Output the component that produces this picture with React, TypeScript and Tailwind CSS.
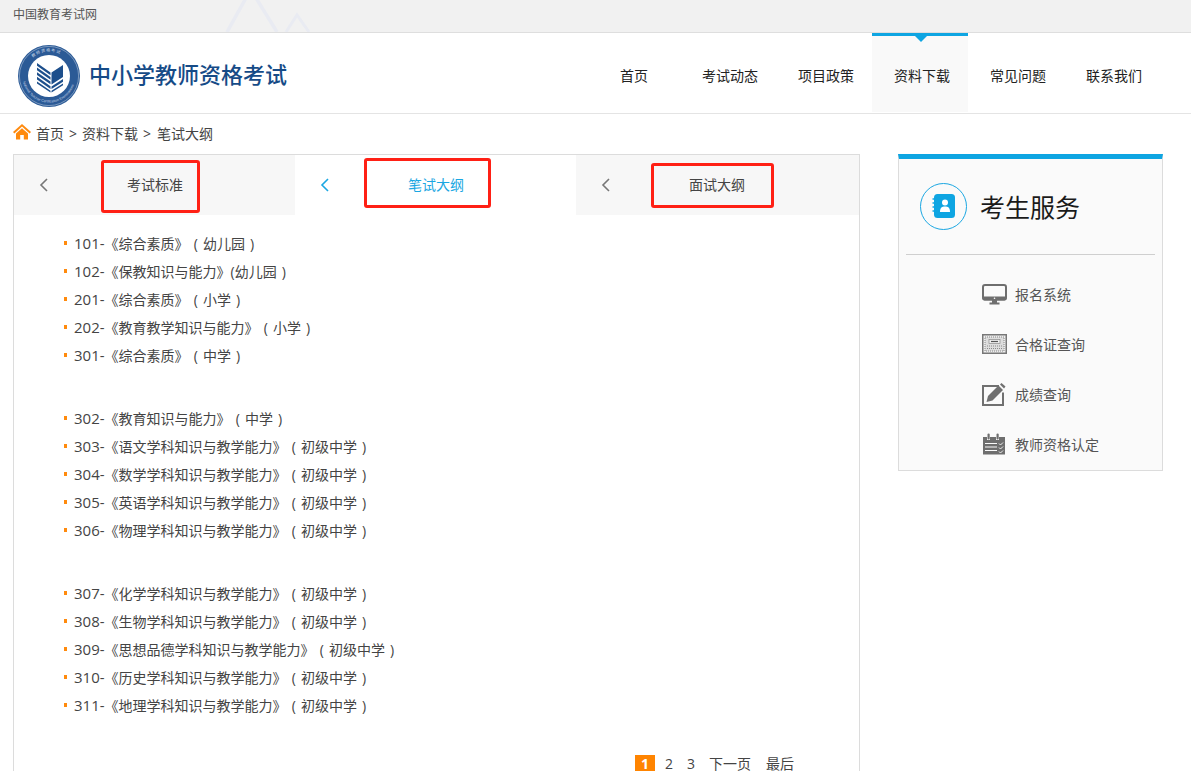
import React from "react";

const FONT = "font-['Open_Sans','Noto_Sans_CJK_SC',sans-serif]";

const navItems = ["首页", "考试动态", "项目政策", "资料下载", "常见问题", "联系我们"];

const groups = [
  [
    ["101-", "《综合素质》 ( 幼儿园 )"],
    ["102-", "《保教知识与能力》(幼儿园 )"],
    ["201-", "《综合素质》 ( 小学 )"],
    ["202-", "《教育教学知识与能力》 ( 小学 )"],
    ["301-", "《综合素质》 ( 中学 )"],
  ],
  [
    ["302-", "《教育知识与能力》 ( 中学 )"],
    ["303-", "《语文学科知识与教学能力》 ( 初级中学 )"],
    ["304-", "《数学学科知识与教学能力》 ( 初级中学 )"],
    ["305-", "《英语学科知识与教学能力》 ( 初级中学 )"],
    ["306-", "《物理学科知识与教学能力》 ( 初级中学 )"],
  ],
  [
    ["307-", "《化学学科知识与教学能力》 ( 初级中学 )"],
    ["308-", "《生物学科知识与教学能力》 ( 初级中学 )"],
    ["309-", "《思想品德学科知识与教学能力》 ( 初级中学 )"],
    ["310-", "《历史学科知识与教学能力》 ( 初级中学 )"],
    ["311-", "《地理学科知识与教学能力》 ( 初级中学 )"],
  ],
];

const Logo = () => (
  <svg width="62" height="62" viewBox="0 0 62 62" className="shrink-0">
    <defs>
      <path id="ringTop" d="M6.5 31 A24.5 24.5 0 0 1 55.5 31" />
      <path id="ringBottom" d="M4.5 31 A26.5 26.5 0 0 0 57.5 31" />
    </defs>
    <circle cx="31" cy="31" r="31" fill="#2b5a96" />
    <circle cx="31" cy="31" r="29.6" fill="none" stroke="#c9d6e6" strokeWidth="0.5" />
    <circle cx="31" cy="31" r="21" fill="#fff" />
    <text fontSize="4" fill="#c9d6e6" fontFamily="Noto Sans CJK SC">
      <textPath href="#ringTop" startOffset="27%">教 师 资 格 考 试</textPath>
    </text>
    <text fontSize="3.5" fill="#c9d6e6" fontFamily="Liberation Sans">
      <textPath href="#ringBottom" startOffset="7%">National Teacher Certification Examinations</textPath>
    </text>
    {/* left stripes of the book */}
    <path
      d="M19 18 L32.5 27.5 V30.2 L19 20.7 Z M19 22.6 L32.5 32 V34.7 L19 25.3 Z M19 27.2 L32.5 36.6 V39.3 L19 29.9 Z M19 31.8 L32.5 41.2 V43.9 L19 34.5 Z M19 36.4 L32.5 45.8 V47.4 L19 38.5 Z"
      fill="#1d4f8c"
    />
    {/* right side, solid block then stripes */}
    <path
      d="M33.5 27.5 L45 20 V32 L33.5 39.5 Z M33.5 41.4 L45 34 V36.7 L33.5 44.1 Z M33.5 45.8 L45 38.4 V40.2 L33.5 47.4 Z"
      fill="#1d4f8c"
    />
  </svg>
);

const Chevron = ({ active }: { active?: boolean }) => (
  <svg width="10" height="14" viewBox="0 0 10 14" fill="none" className="shrink-0">
    <path d="M8 1 L2 7 L8 13" stroke={active ? "#1ba7e2" : "#777"} strokeWidth="1.6" />
  </svg>
);

const MonitorIcon = () => (
  <svg width="25" height="21" viewBox="0 0 25 21">
    <rect x="1" y="1" width="23" height="14.5" rx="2" fill="none" stroke="#6e6e6e" strokeWidth="2" />
    <path d="M0.5 12.5 H24.5 V14 A2 2 0 0 1 22.5 16.5 H2.5 A2 2 0 0 1 0.5 14 Z" fill="#6e6e6e" />
    <path d="M10 16 H15 V18.5 H17.5 V20.5 H7.5 V18.5 H10 Z" fill="#6e6e6e" />
    <circle cx="12.5" cy="14.2" r="0.8" fill="#fff" />
  </svg>
);

const CertIcon = () => (
  <svg width="25" height="20" viewBox="0 0 25 20">
    <rect x="0.75" y="0.75" width="23.5" height="18.5" fill="#eee" stroke="#777" strokeWidth="1.5" />
    <rect x="3" y="3" width="19" height="14" fill="#ddd" stroke="#888" strokeDasharray="1 1" />
    <rect x="7" y="5.5" width="11" height="4" fill="#eee" stroke="#8a8a8a" strokeWidth="0.7" />
    <path d="M9 7.5 H16" stroke="#555" strokeWidth="1.2" />
    <path d="M5 12 H20 M5 14.5 H20" stroke="#8a8a8a" strokeDasharray="1 1" />
  </svg>
);

const EditIcon = () => (
  <svg width="24" height="23" viewBox="0 0 24 23">
    <path d="M17 3 H1 V22 H21 V9.5" fill="none" stroke="#707070" strokeWidth="2" />
    <path d="M4.5 19 L6 13 L16.5 2.5 L21 7 L10.5 17.5 Z" fill="#707070" />
    <path d="M18 1.5 L19.5 0 L23.5 3.5 L22 5.5 Z" fill="#707070" />
  </svg>
);

const PlanIcon = () => (
  <svg width="24" height="22" viewBox="0 0 24 22">
    <path d="M1 4 H5 V7 H8 V4 H14 V7 H17 V4 H23 V21.5 H1 Z" fill="#6e6e6e" />
    <rect x="5.5" y="0.5" width="2.2" height="6" rx="1.1" fill="#6e6e6e" />
    <rect x="14.5" y="0.5" width="2.2" height="6" rx="1.1" fill="#6e6e6e" />
    <path d="M3 10.5 H15 M3 14 H15 M3 17.5 H15" stroke="#fafafa" strokeWidth="1.1" />
    <path d="M17 10.5 L18.5 12 L21 9.5 M17 14.5 L18.5 16 L21 13.5 M17 18.5 L18.5 20 L21 17.5" stroke="#fafafa" strokeWidth="0.9" fill="none" />
  </svg>
);

const services = [
  { label: "报名系统", icon: <MonitorIcon /> },
  { label: "合格证查询", icon: <CertIcon /> },
  { label: "成绩查询", icon: <EditIcon /> },
  { label: "教师资格认定", icon: <PlanIcon /> },
];

const tabs = [
  { label: "考试标准", active: false },
  { label: "笔试大纲", active: true },
  { label: "面试大纲", active: false },
];

const App = () => {
  return (
    <div className={`${FONT} relative h-[771px] w-[1191px] overflow-hidden bg-white text-[14px] text-[#444]`}>
      {/* top strip */}
      <div className="relative flex h-[33px] items-center overflow-hidden border-b border-[#dedede] bg-[#f1f1f1] pb-[3px] pl-[13px] text-[12px] text-[#555]">
        中国教育考试网
        <svg width="100" height="32" viewBox="0 0 100 32" className="absolute left-[222px] top-0" fill="none">
          <path d="M5 32 L24 -2 M34 -2 L55 32" stroke="#e9ebf2" strokeWidth="3.5" />
          <path d="M64 32 L75 15 L87 32" stroke="#e9ebf2" strokeWidth="3" />
        </svg>
      </div>

      {/* header */}
      <div className="flex h-[81px] items-start border-b border-[#e4e4e4]">
        <div className="flex items-center pl-[18px] pt-[12px]">
          <Logo />
          <span className="mb-[5px] ml-[9px] text-[22px] font-medium leading-[32px] text-[#164b87]">中小学教师资格考试</span>
        </div>
        <div className="ml-auto mr-[31px] flex h-[79px] text-[#222]">
          {navItems.map((item, i) =>
            i === 3 ? (
              <div key={item} className="relative flex w-24 items-center justify-center border-t-[3px] border-[#0ea5e2] bg-[#f9f9f9] pl-1 pt-[2px]">
                <span className="absolute left-[43px] top-0 h-0 w-0 border-x-[6px] border-t-[6px] border-x-transparent border-t-[#0ea5e2]" />
                {item}
              </div>
            ) : (
              <div key={item} className="flex w-24 items-center justify-center pl-1 pt-[5px]">
                {item}
              </div>
            )
          )}
        </div>
      </div>

      {/* breadcrumb */}
      <div className="flex h-[40px] items-center pb-[2px] pl-[13px] text-[#444]">
        <svg width="18" height="16" viewBox="0 0 18 16" className="mb-[2px]">
          <path d="M9 0 L18 8 L16.6 9.4 L9 2.6 L1.4 9.4 L0 8 Z" fill="#ff8a0d" />
          <path d="M3 9.5 L9 4.2 L15 9.5 V15.5 H10.8 V11 H7.2 V15.5 H3 Z" fill="#ff8a0d" />
        </svg>
        <span className="ml-[5px]">首页</span>
        <span className="ml-[5px]">&gt;</span>
        <span className="ml-[5px]">资料下载</span>
        <span className="ml-[5px]">&gt;</span>
        <span className="ml-[6px]">笔试大纲</span>
      </div>

      {/* main */}
      <div className="flex items-start pl-[13px]">
        <div className="relative w-[847px] border border-[#dcdcdc] pb-[40px]">
          <div className="flex h-[60px]">
            {tabs.map((tab) => (
              <div
                key={tab.label}
                className={`flex w-[281px] items-center pl-[25px] ${
                  tab.active ? "bg-white text-[#1ba7e2]" : "bg-[#f7f7f7] text-[#444]"
                }`}
              >
                <Chevron active={tab.active} />
                <span className="mb-[2px] ml-[78px]">{tab.label}</span>
              </div>
            ))}
            <div className="flex-1 bg-[#f7f7f7]" />
          </div>

          <div className="pl-[50px] pt-[14px]">
            {groups.map((group, i) => (
              <ul key={i} className="mb-[35px]">
                {group.map(([code, title]) => (
                  <li key={code} className="flex h-[28px] items-center">
                    <span className="mr-[7px] h-[4px] w-[3px] bg-[#ff8a0d]" />
                    <span className="whitespace-pre [word-spacing:1.5px]">
                      <span className="text-[15px]">{code}</span>
                      {title}
                    </span>
                  </li>
                ))}
              </ul>
            ))}
          </div>

          <div className="absolute left-[621px] top-[600px] flex h-[16px] items-center">
            <span className="flex h-[16px] w-[20px] items-center justify-center bg-[#ff8400] font-bold text-white">1</span>
            <span className="ml-[10px]">2</span>
            <span className="ml-[14px]">3</span>
            <span className="ml-[14px]">下一页</span>
            <span className="ml-[15px]">最后</span>
          </div>

          {/* red annotation boxes */}
          <div className="absolute left-[87px] top-[5px] h-[53px] w-[99px] rounded-[3px] border-[3px] border-[#ff2015]" />
          <div className="absolute left-[350px] top-[3px] h-[50px] w-[127px] rounded-[3px] border-[3px] border-[#ff2015]" />
          <div className="absolute left-[637px] top-[8px] h-[45px] w-[123px] rounded-[3px] border-[3px] border-[#ff2015]" />
        </div>

        {/* sidebar */}
        <div className="ml-[38px] h-[317px] w-[265px] border-x border-b border-t-[5px] border-x-[#dcdcdc] border-b-[#dcdcdc] border-t-[#0ea5e2] bg-[#fafafa] px-[7px]">
          <div className="flex h-[96px] items-center border-b border-[#cfcfcf] pb-[1px] pl-[14px]">
            <div className="flex h-[47px] w-[47px] items-center justify-center rounded-full border border-[#1ba7e2]">
              <svg width="24" height="26" viewBox="0 0 24 26">
                <rect x="2" y="1" width="21" height="24" rx="3.5" fill="#0ea5e2" />
                <path d="M0.5 6 H3.5 M0.5 10 H3.5 M0.5 14 H3.5 M0.5 18 H3.5" stroke="#0ea5e2" strokeWidth="1.5" />
                <circle cx="13" cy="9.5" r="3" fill="#fff" />
                <path d="M8 19 C8 14.5 10 13.5 13 13.5 C16 13.5 18 14.5 18 19 Z" fill="#fff" />
              </svg>
            </div>
            <span className="ml-[13px] mt-[4px] text-[25px] text-[#1a1a1a]">考生服务</span>
          </div>
          <div className="pt-[14px]">
            {services.map((s) => (
              <div key={s.label} className="flex h-[50px] items-center pl-[75px]">
                <span className="flex w-[26px] justify-center">{s.icon}</span>
                <span className="ml-[8px] text-[#555]">{s.label}</span>
              </div>
            ))}
          </div>
        </div>
      </div>
    </div>
  );
};

export default App;
